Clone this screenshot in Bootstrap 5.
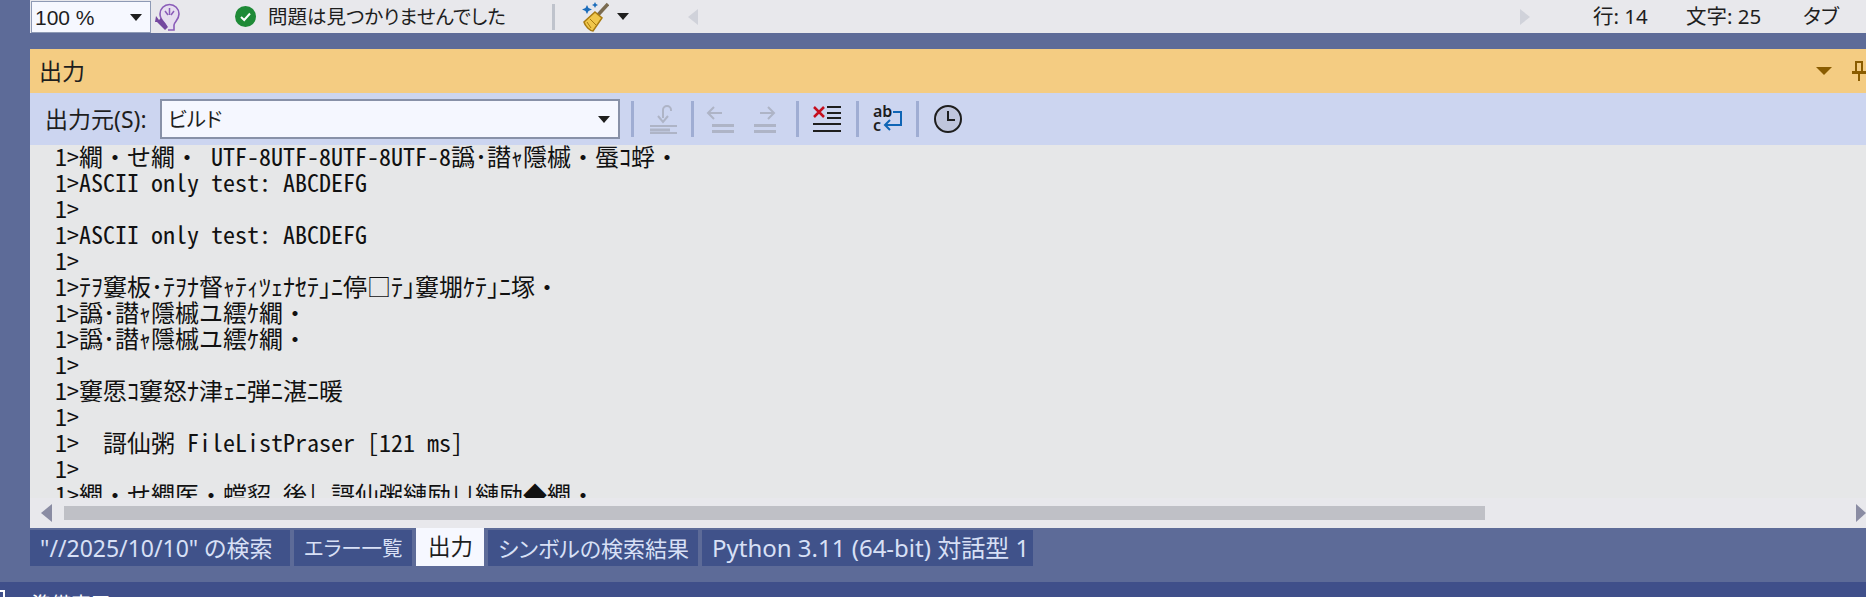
<!DOCTYPE html>
<html lang="ja">
<head>
<meta charset="utf-8">
<title>出力</title>
<link href="https://cdn.jsdelivr.net/npm/bootstrap@5.3.0/dist/css/bootstrap.min.css" rel="stylesheet">
<style>
html,body{height:597px;overflow:hidden;}
body{background:#5d6b98;color:#1e1e1e;font-family:"Noto Sans","Noto Sans CJK JP","Liberation Sans",sans-serif;font-size:20px;font-feature-settings:"palt";line-height:1;}
.vs-main{margin-left:30px;}
.vs-status{height:33px;background:#e8e8ec;white-space:nowrap;}
.vs-zoom{width:120px;height:32px;margin-top:1px;margin-left:1px;background:#f6f8ff;border:1px solid #8e9ab5;padding-left:3px;font-size:21px;font-family:"Liberation Sans",sans-serif;}
.vs-caret{width:0;height:0;border-left:6px solid transparent;border-right:6px solid transparent;border-top:7px solid #1e1e1e;}
.vs-bulb{margin-left:3px;}
.vs-check{margin-left:55px;}
.vs-msg{margin-left:12px;font-size:19.500px;width:284px;}
.vs-sep1{width:3px;height:26px;background:#bfc3cc;}
.vs-broom{margin-left:27px;}
.vs-broom-caret{margin-left:8px;}
.vs-tri-l{margin-left:53px;border-top:8px solid transparent;border-bottom:8px solid transparent;border-right:10px solid #d0d2da;}
.vs-tri-r{border-top:8px solid transparent;border-bottom:8px solid transparent;border-left:10px solid #d0d2da;}
.vs-line{margin-left:57px;font-size:20.500px;width:93px;}
.vs-char{font-size:20.500px;width:117px;}
.vs-tab{font-size:20.500px;width:63px;}
.vs-gap{height:16px;}
.vs-title{height:44px;background:#f4cc82;padding-left:9px;font-size:23px;}
.vs-title-tri{width:0;height:0;border-left:8px solid transparent;border-right:8px solid transparent;border-top:8px solid #8a5c00;margin-right:19px;}
.vs-pin{margin-right:0;display:block;}
.vs-tools{height:52px;background:#ccd5f0;padding-left:15px;}
.vs-label{font-size:23px;width:115px;white-space:nowrap;}
.vs-combo{width:460px;height:40px;background:#f5f7ff;border:2px solid #8891a8;padding:0 8px 0 6px;font-size:20.500px;}
.vs-sep2{width:3px;height:36px;background:#9fadd3;flex:none;}
.vs-s1{margin-left:11px;}
.vs-ic{display:block;flex:none;}
.vs-ic1{margin:0 14px 0 15px;}
.vs-ic2{margin:0 16px 0 12px;}
.vs-ic3{margin:0 18px 0 0;}
.vs-ic4{margin:0 15px 0 14px;}
.vs-ic5{margin:0 13px 0 14px;}
.vs-ic6{margin-left:14px;}
.vs-out{height:353px;background:#e6e7e8;overflow:hidden;padding-left:25px;}
.vs-out div{height:26px;line-height:22px;font-family:"Noto Sans CJK JP",monospace;font-size:24px;font-feature-settings:"hwid";font-kerning:none;white-space:pre;color:#111;}
.vs-scroll{height:30px;background:#e8e8ec;padding-left:11px;}
.vs-arrow-l{width:0;height:0;border-top:9px solid transparent;border-bottom:9px solid transparent;border-right:11px solid #8a8ca3;}
.vs-thumb{width:1421px;height:14px;background:#bfc0c6;margin-left:12px;}
.vs-arrow-r{width:0;height:0;margin-left:auto;border-top:9px solid transparent;border-bottom:9px solid transparent;border-left:10px solid #8a8ca3;}
.vs-tabs{height:38px;gap:4px;white-space:nowrap;}
.vs-t{height:36px;margin-top:2px;background:#40528a;color:#d8e0f6;font-size:22px;padding-left:10px;}
.vs-t.vs-on{height:38px;margin-top:0;background:#f6f8ff;color:#1e1e1e;font-size:22.500px;}
.w1{width:260px;font-size:23px;}.w2{width:118px;padding-left:10px;font-size:20.500px;}.w3{width:68px;padding-left:12px;}.w4{width:210px;}.w5{width:331px;font-size:24px;}
.vs-bottom{margin-top:16px;height:15px;background:#3f4f8a;overflow:hidden;position:relative;}
.vs-bottom span{color:#fff;font-size:20px;line-height:1;margin-left:31px;margin-top:13px;display:block;}
.vs-corner{position:absolute;left:-6px;top:8px;width:11px;height:14px;border:2px solid #fff;}
</style>
</head>
<body>
<div class="vs-main">
  <div class="vs-status d-flex align-items-center">
    <div class="vs-zoom d-flex align-items-center justify-content-between pe-2"><span>100 %</span><i class="vs-caret"></i></div>
    <svg class="vs-bulb vs-ic" width="26" height="30" viewBox="0 0 26 30" fill="none" stroke="#8a5cb8" stroke-width="1.600"><path d="M12 24c0-3-6-5-6-12a9.500 9.500 0 1 1 19 0c0 6-5 8-5 11v5h-6" fill="#e6deef"/><path d="M15.500 13V6M11 9l3 4M20 9l-3 4" stroke-width="1.500"/><path d="M1 14l3 4 2-2 7 9-3 3-8-8-2 0z" transform="translate(1 0)" fill="#74479f" stroke="none"/></svg>
    <svg class="vs-check vs-ic" width="21" height="21" viewBox="0 0 21 21"><circle cx="10.500" cy="10.500" r="10.500" fill="#1e8a37"/><path d="M6 11l3.200 3L15 7.500" fill="none" stroke="#fff" stroke-width="2"/></svg>
    <span class="vs-msg">問題は見つかりませんでした</span>
    <i class="vs-sep1"></i>
    <svg class="vs-broom vs-ic" width="27" height="30" viewBox="0 0 27 30"><path d="M26 2L15 14" stroke="#7a6b50" stroke-width="3.500"/><path d="M13 10l7 6-9 13c-3 0-8-5-9-9z" fill="#f0c64a" stroke="#a87a10" stroke-width="1.500"/><path d="M8 17l6 6M5 20l4 6" stroke="#a87a10"/><path d="M5 3l1.500 3L10 7.500 6.500 9 5 12 3.500 9 0 7.500 3.500 6z M13 0l1 2 2 1-2 1-1 2-1-2-2-1 2-1z" fill="#1c6dbb"/></svg>
    <i class="vs-caret vs-broom-caret"></i>
    <i class="vs-caret vs-tri-l"></i>
    <i class="flex-grow-1"></i>
    <i class="vs-caret vs-tri-r"></i>
    <span class="vs-line">行: 14</span>
    <span class="vs-char">文字: 25</span>
    <span class="vs-tab">タブ</span>
  </div>
  <div class="vs-gap"></div>
  <div class="vs-title d-flex align-items-center">
    <span class="flex-grow-1">出力</span>
    <i class="vs-title-tri"></i>
    <svg class="vs-pin" width="15" height="22" viewBox="0 0 15 22"><path d="M4 1h8v10h3v3H9v7H7v-7H1v-3h3zM6 3v8h4V3z" fill="#8a5c00"/></svg>
  </div>
  <div class="vs-tools d-flex align-items-center">
    <span class="vs-label">出力元(S):</span>
    <div class="vs-combo d-flex align-items-center justify-content-between"><span>ビルド</span><i class="vs-caret"></i></div>
    <i class="vs-sep2 vs-s1"></i>
    <svg class="vs-ic vs-ic1" width="28" height="30" viewBox="0 0 28 30" fill="none" stroke="#aeb4c6" stroke-width="2"><path d="M14 14V6a4 4 0 0 1 8 0v1"/><path d="M9 12l5 6 5-6"/><path d="M6 22h23M1 22h8"/><path d="M1 26h28" stroke-width="3" stroke-dasharray="20 8"/><path d="M1 29h28"/></svg>
    <i class="vs-sep2"></i>
    <svg class="vs-ic vs-ic2" width="28" height="30" viewBox="0 0 28 30" fill="none" stroke="#aeb4c6" stroke-width="2"><path d="M16 9H2M8 3L2 9l6 6"/><path d="M6 20h22v3H6zM6 26h22v3H6z" fill="#aeb4c6" stroke="none"/></svg>
    <svg class="vs-ic vs-ic3" width="28" height="30" viewBox="0 0 28 30" fill="none" stroke="#aeb4c6" stroke-width="2"><path d="M10 9h14M18 3l6 6-6 6"/><path d="M4 20h22v3H4zM4 26h22v3H4z" fill="#aeb4c6" stroke="none"/></svg>
    <i class="vs-sep2"></i>
    <svg class="vs-ic vs-ic4" width="28" height="30" viewBox="0 0 28 30"><path d="M1 3l10 10M11 3L1 13" stroke="#c50f1f" stroke-width="2.500"/><path d="M14 3h14M14 9h14M14 14h14M0 20h28M0 27h28" stroke="#1e1e1e" stroke-width="2"/></svg>
    <i class="vs-sep2"></i>
    <svg class="vs-ic vs-ic5" width="30" height="30" viewBox="0 0 30 30"><text x="0" y="13" font-family="Noto Sans" font-weight="600" font-size="16" fill="#1e1e1e">ab</text><text x="0" y="27" font-family="Noto Sans" font-weight="600" font-size="16" fill="#1e1e1e">c</text><path d="M20 8h8v13H12M17 16l-5 5 5 5" fill="none" stroke="#0f65b5" stroke-width="2"/></svg>
    <i class="vs-sep2"></i>
    <svg class="vs-ic vs-ic6" width="30" height="30" viewBox="0 0 30 30"><circle cx="15" cy="15" r="13" fill="#bfc5dc" stroke="#1e1e1e" stroke-width="2"/><path d="M15 7v9h7" fill="none" stroke="#1e1e1e" stroke-width="2"/></svg>
  </div>
  <div class="vs-out">
<div>1&gt;繝・せ繝・ UTF-8UTF-8UTF-8UTF-8譌･譛ｬ隱槭・蜃ｺ蜉・</div>
<div>1&gt;ASCII only test: ABCDEFG</div>
<div>1&gt;</div>
<div>1&gt;ASCII only test: ABCDEFG</div>
<div>1&gt;</div>
<div>1&gt;ﾃｦ窶板･ﾃｦﾅ督ｬﾃｨﾂｪﾅｾﾃ｣ﾆ停□ﾃ｣窶堋ｹﾃ｣ﾆ塚・</div>
<div>1&gt;譌･譛ｬ隱槭ユ繧ｹ繝・</div>
<div>1&gt;譌･譛ｬ隱槭ユ繧ｹ繝・</div>
<div>1&gt;</div>
<div>1&gt;窶愿ｺ窶怒ﾅ津ｪﾆ弾ﾆ湛ﾆ暖</div>
<div>1&gt;</div>
<div>1&gt;  謌仙粥 FileListPraser [121 ms]</div>
<div>1&gt;</div>
<div>1&gt;繝・せ繝医・蟷貂 後| 謌仙粥縺励∪縺励◆繝・</div>
  </div>
  <div class="vs-scroll d-flex align-items-center">
    <i class="vs-arrow-l"></i>
    <div class="vs-thumb"></div>
    <i class="vs-arrow-r"></i>
  </div>
  <div class="vs-tabs d-flex">
    <div class="vs-t w1 d-flex align-items-center">"//2025/10/10" の検索</div>
    <div class="vs-t w2 d-flex align-items-center">エラー一覧</div>
    <div class="vs-t vs-on w3 d-flex align-items-center">出力</div>
    <div class="vs-t w4 d-flex align-items-center">シンボルの検索結果</div>
    <div class="vs-t w5 d-flex align-items-center">Python 3.11 (64-bit) 対話型 1</div>
  </div>
</div>
<div class="vs-bottom"><i class="vs-corner"></i><span>準備完了</span></div>
</body>
</html>
